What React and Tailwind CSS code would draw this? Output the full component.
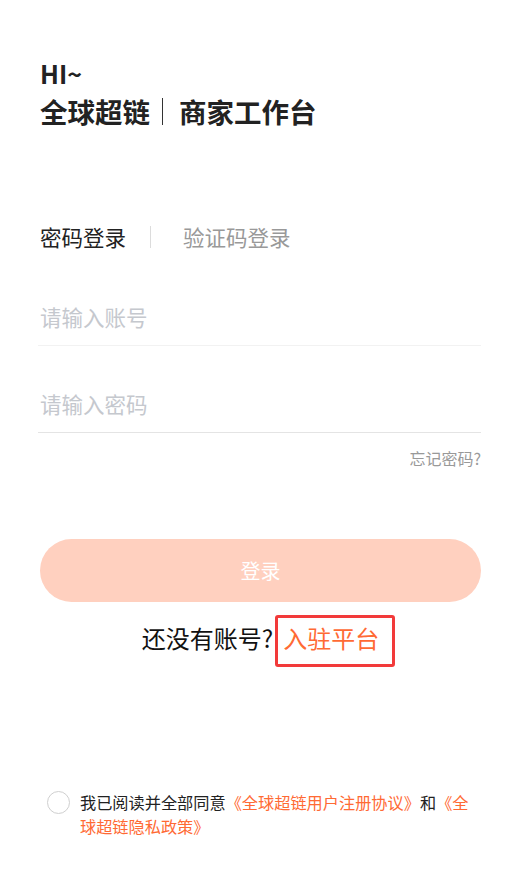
import React from 'react';

const font = { fontFamily: '"Noto Sans CJK SC", "Noto Sans", sans-serif' };

export default function App() {
  return (
    <div className="min-h-[881px] w-[518px] bg-white pl-[40px] pr-[37px] pt-[57px] text-[#222]" style={font}>
      {/* greeting */}
      <div className="text-[25px] font-bold leading-[32px]">HI~</div>
      <div className="mt-[4px] flex items-center text-[27.5px] font-bold leading-[36px]">
        <span>全球超链</span>
        <span className="ml-[12px] mr-[16px] h-[27px] w-px bg-[#333]" />
        <span>商家工作台</span>
      </div>

      {/* tabs */}
      <div className="mt-[93px] flex items-center text-[21.5px] leading-[30px]">
        <span className="text-[#222]">密码登录</span>
        <span className="ml-[24px] mr-[32px] h-[22px] w-px bg-[#dcdcdc]" />
        <span className="text-[#999]">验证码登录</span>
      </div>

      {/* inputs */}
      <div className="mt-[38px] -ml-[2px] flex h-[56px] items-center border-b border-[#f2f2f2] pl-[2px]">
        <input
          className="w-full bg-transparent text-[21.5px] outline-none placeholder:text-[#c5c8ce]"
          placeholder="请输入账号"
          style={font}
        />
      </div>
      <div className="mt-[31px] -ml-[2px] flex h-[56px] items-center border-b border-[#e4e4e4] pl-[2px]">
        <input
          type="password"
          className="w-full bg-transparent text-[21.5px] outline-none placeholder:text-[#c5c8ce]"
          placeholder="请输入密码"
          style={font}
        />
      </div>
      <div className="mt-[15px] text-right text-[16px] leading-[20px] text-[#999]">忘记密码?</div>

      {/* login button */}
      <button
        className="mt-[71px] flex h-[63px] w-full items-center justify-center rounded-full bg-[#ffd0bf] text-[20px] text-white"
        style={font}
      >
        登录
      </button>

      <div className="mt-[10px] flex h-[52px] items-center justify-center text-[24px] leading-[32px]">
        <span className="text-[#111]">还没有账号?</span>
        <span className="relative ml-[10px] text-[#ff6a34]">
          入驻平台
          <span className="pointer-events-none absolute -left-[8px] -right-[16px] -top-[7px] -bottom-[13px] rounded-[3px] border-[3px] border-[#f23a3a]" />
        </span>
      </div>

      {/* agreement */}
      <div className="mt-[126px] flex items-start">
        <span className="ml-[7px] mr-[10px] mt-[1px] h-[23px] w-[23px] shrink-0 rounded-full border-[1.5px] border-[#cfcfcf]" />
        <p className="w-[392px] text-[16.2px] leading-[24px] text-[#222]">
          我已阅读并全部同意<span className="text-[#ff6a34]">《全球超链用户注册协议》</span>和<span className="text-[#ff6a34]">《全球超链隐私政策》</span>
        </p>
      </div>
    </div>
  );
}
